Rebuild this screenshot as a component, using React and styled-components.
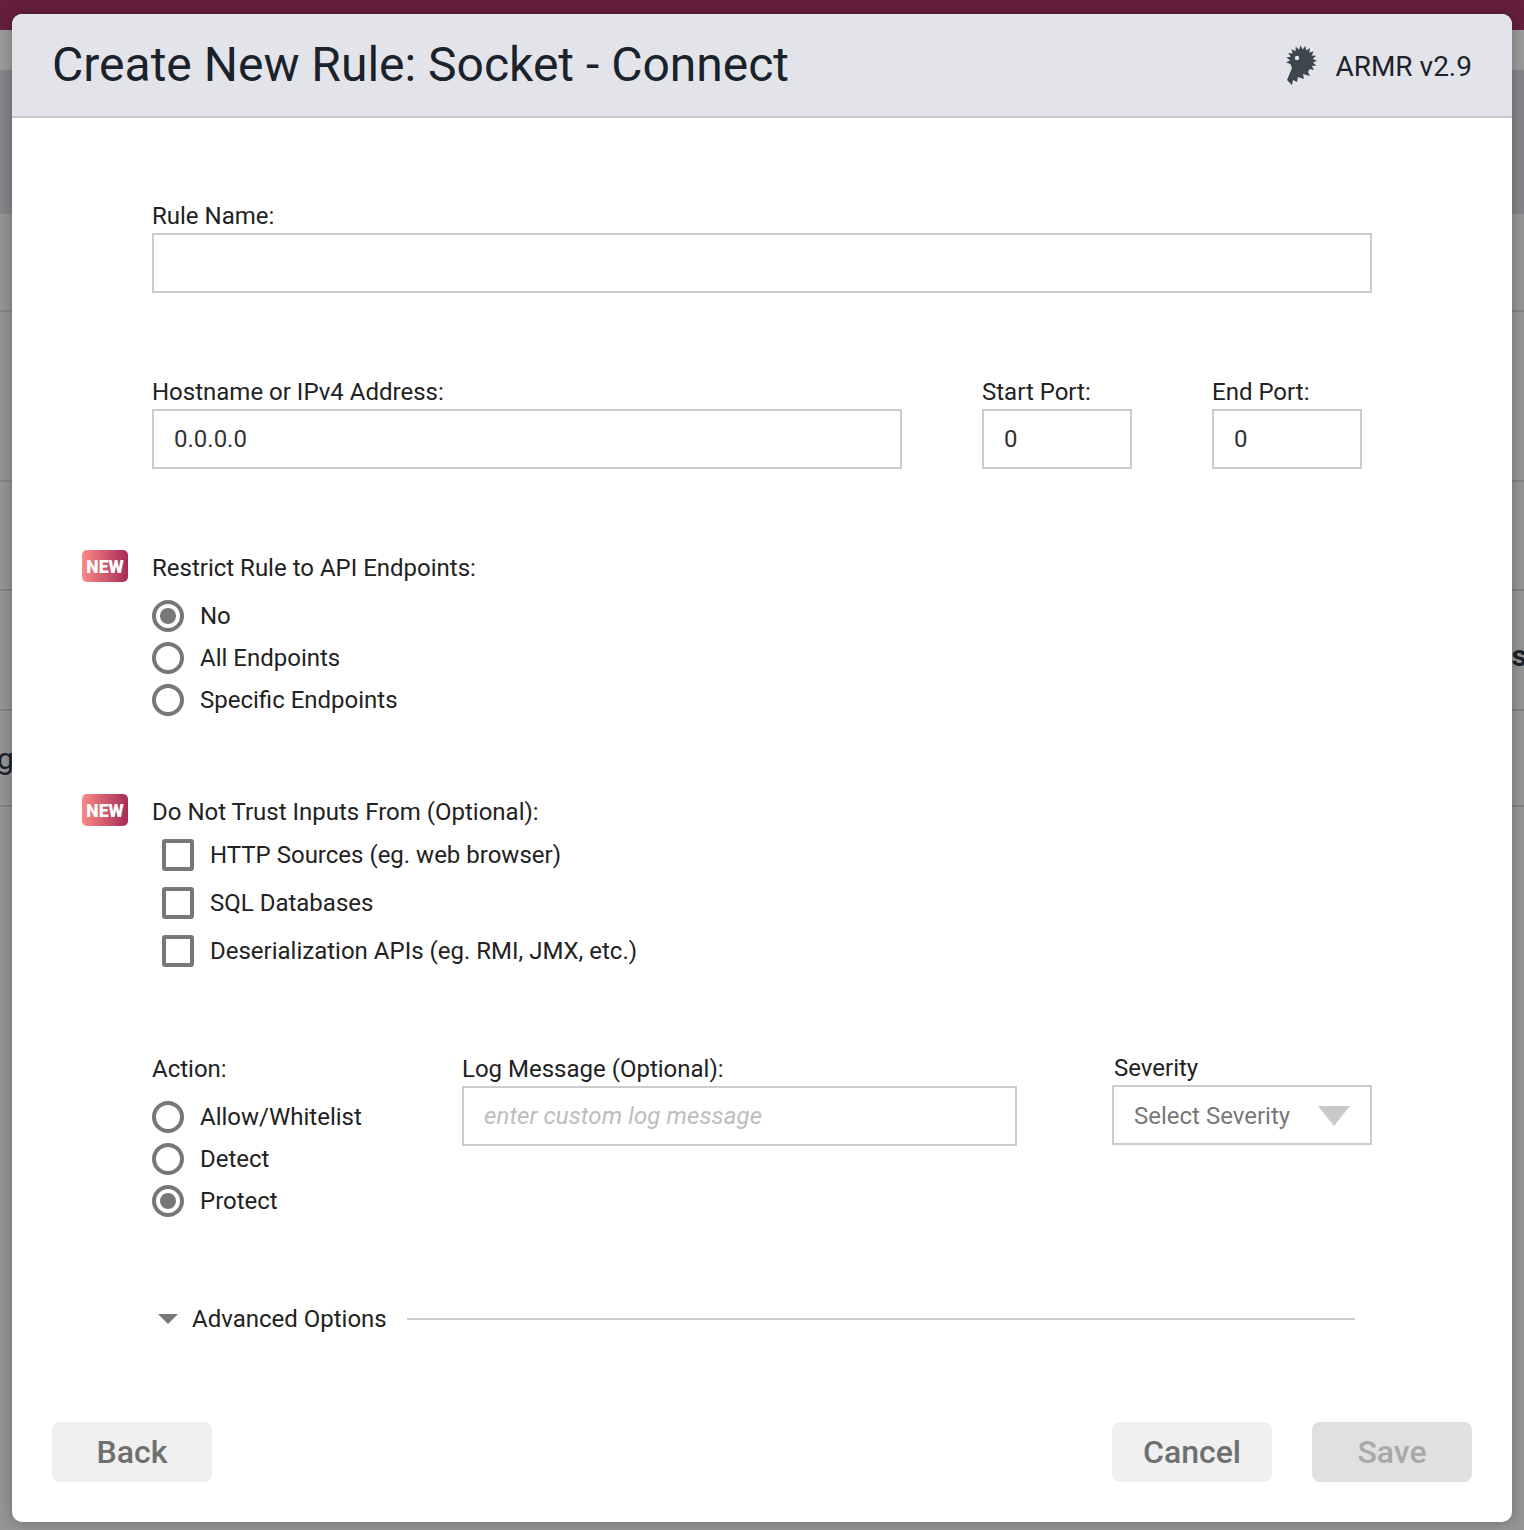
import React from 'react'
import styled, { createGlobalStyle } from 'styled-components'

const GlobalStyle = createGlobalStyle`
  html, body {
    margin: 0;
    padding: 0;
    background: #959595;
    font-family: Roboto, "Liberation Sans", sans-serif;
  }
  * {
    box-sizing: border-box;
  }
`

const Page = styled.div`
  position: relative;
  width: 1524px;
  height: 1530px;
  overflow: hidden;
  background: #959595;
`

const TopBar = styled.div`
  height: 30px;
  background: #66203c;
`

const SubBar = styled.div`
  height: 40px;
  background: #9c9c9c;
`

const Band = styled.div`
  height: 144px;
  background: #838588;
`

const BackRow = styled.div`
  height: ${(p) => p.$height}px;
  display: flex;
  align-items: center;
  justify-content: ${(p) => (p.$end ? 'flex-end' : 'flex-start')};
  border-bottom: ${(p) => (p.$plain ? 'none' : '2px solid #838383')};
  color: #1d2229;
  font-size: 30px;
  font-weight: ${(p) => (p.$end ? 700 : 400)};
`

const PeekLetter = styled.span`
  margin: 0 -3px;
  position: relative;
  top: ${(p) => p.$top || 0}px;
`

const Modal = styled.div`
  position: absolute;
  left: 12px;
  top: 14px;
  width: 1500px;
  height: 1508px;
  display: flex;
  flex-direction: column;
  background: #fff;
  border-radius: 10px;
  box-shadow: 0 0 14px rgba(0, 0, 0, 0.28);
  overflow: hidden;
`

const Header = styled.header`
  height: 104px;
  flex: none;
  display: flex;
  align-items: center;
  justify-content: space-between;
  padding: 0 40px;
  background: #e3e4e9;
  border-bottom: 2px solid #c8c8c8;
`

const Title = styled.h1`
  margin: 0 0 2px;
  font-size: 48px;
  font-weight: 400;
  color: #1a222c;
`

const Version = styled.div`
  display: flex;
  align-items: center;
  gap: 18px;
  font-size: 28px;
  color: #1d232c;
`

const VersionText = styled.span`
  margin-top: 2px;
`

const Form = styled.div`
  flex: 1;
  display: flex;
  flex-direction: column;
  padding: 84px 0 0 140px;
`

const Section = styled.section`
  margin-bottom: ${(p) => p.$gap}px;
`

const Row = styled.div`
  display: flex;
  align-items: flex-start;
`

const Field = styled.div`
  width: ${(p) => p.$width}px;
  margin-right: ${(p) => p.$after || 0}px;
  margin-top: ${(p) => (p.$raise ? -p.$raise : 0)}px;
`

const Label = styled.div`
  position: relative;
  height: 28px;
  line-height: 28px;
  margin-bottom: ${(p) => p.$gap ?? 3}px;
  padding-left: ${(p) => p.$indent || 0}px;
  font-size: 24px;
  color: #222;
  white-space: nowrap;
`

const Badge = styled.span`
  position: absolute;
  left: -70px;
  top: -4px;
  width: 46px;
  height: 32px;
  padding-top: 2px;
  display: flex;
  align-items: center;
  justify-content: center;
  border-radius: 5px;
  background: linear-gradient(90deg, #f98a84, #a62b57);
  color: #fff;
  font-size: 17.5px;
  font-weight: 900;
`

const TextInput = styled.input`
  display: block;
  width: 100%;
  height: 60px;
  padding: 0 20px;
  border: 2px solid #cccccc;
  border-radius: 0;
  outline: none;
  background: #fff;
  font-family: inherit;
  font-size: 24px;
  color: #333;

  &::placeholder {
    color: #bdbdbd;
    font-style: italic;
    letter-spacing: 0.1px;
    opacity: 1;
  }
`

const OptionList = styled.div`
  display: flex;
  flex-direction: column;
  gap: ${(p) => p.$gap}px;
  padding-left: ${(p) => p.$indent || 0}px;
`

const Option = styled.div`
  display: flex;
  align-items: center;
  gap: 16px;
  height: 32px;
  font-size: 24px;
  color: #222;
  white-space: nowrap;
`

const Radio = styled.span`
  width: 32px;
  height: 32px;
  flex: none;
  display: flex;
  align-items: center;
  justify-content: center;
  border: 4px solid #777;
  border-radius: 50%;

  &::after {
    content: '';
    width: 16px;
    height: 16px;
    border-radius: 50%;
    background: ${(p) => (p.$checked ? '#777' : 'transparent')};
  }
`

const Check = styled.span`
  width: 32px;
  height: 32px;
  flex: none;
  border: 4px solid #777;
  border-radius: 3px;
`

const SelectBox = styled.div`
  width: 260px;
  height: 60px;
  display: flex;
  align-items: center;
  justify-content: space-between;
  padding: 2px 20px 0;
  border: 2px solid #cccccc;
  font-size: 24px;
  color: #777;
`

const Caret = styled.span`
  width: 0;
  height: 0;
  border-left: ${(p) => p.$size}px solid transparent;
  border-right: ${(p) => p.$size}px solid transparent;
  border-top: ${(p) => p.$drop}px solid ${(p) => p.$color};
`

const Advanced = styled.div`
  display: flex;
  align-items: center;
  width: 1203px;
  height: 32px;
  padding-left: 6px;
  font-size: 24px;
  color: #222;
  white-space: nowrap;
`

const AdvancedText = styled.span`
  margin: 0 20px 0 14px;
`

const Rule = styled.div`
  flex: 1;
  height: 2px;
  background: #cccccc;
`

const Footer = styled.footer`
  flex: none;
  display: flex;
  justify-content: space-between;
  padding: 0 40px 40px;
`

const ButtonGroup = styled.div`
  display: flex;
  gap: 40px;
`

const Button = styled.button`
  width: 160px;
  height: 60px;
  border: none;
  border-radius: 8px;
  background: ${(p) => (p.disabled ? '#e0e0e0' : '#f0f0f0')};
  color: ${(p) => (p.disabled ? '#a9a9a9' : '#6f6f6f')};
  font-family: inherit;
  font-size: 32px;
  font-weight: 500;
`

// saw blade head with a tail, spikes are computed round the circle
function logoPath() {
  const pts = []
  const cx = 14.5
  const cy = 16
  const count = 26
  for (let i = 0; i <= count; i++) {
    const a = (-195 + (i * 240) / count) * (Math.PI / 180)
    const r = i % 2 ? 15.5 : 11.5
    pts.push(`${(cx + r * Math.cos(a)).toFixed(1)} ${(cy + r * Math.sin(a)).toFixed(1)}`)
  }
  return `M${pts.join('L')}L21 27L23 31L16 29L17 34L11 32L10 37L6 35L5 40L0 35L5 23Z`
}

function Logo() {
  return (
    <svg width="32" height="40" viewBox="-2 0 32 40">
      <path d={logoPath()} fill="#3d454d" />
      <circle cx="10" cy="13" r="2.2" fill="#e3e4e9" />
    </svg>
  )
}

export default function App() {
  return (
    <Page>
      <GlobalStyle />
      <TopBar />
      <SubBar />
      <Band />
      <BackRow $height={98} />
      <BackRow $height={170} />
      <BackRow $height={109} />
      <BackRow $height={120} $end>
        <PeekLetter $top={5}>s</PeekLetter>
      </BackRow>
      <BackRow $height={96}>
        <PeekLetter>g</PeekLetter>
      </BackRow>
      <BackRow $height={300} $plain />

      <Modal>
        <Header>
          <Title>Create New Rule: Socket - Connect</Title>
          <Version>
            <Logo />
            <VersionText>ARMR v2.9</VersionText>
          </Version>
        </Header>
        <Form>
          <Section $gap={85}>
            <Label>Rule Name:</Label>
            <Field $width={1220}>
              <TextInput />
            </Field>
          </Section>

          <Section $gap={85}>
            <Row>
              <Field $width={750} $after={80}>
                <Label>Hostname or IPv4 Address:</Label>
                <TextInput defaultValue="0.0.0.0" />
              </Field>
              <Field $width={150} $after={80}>
                <Label>Start Port:</Label>
                <TextInput defaultValue="0" />
              </Field>
              <Field $width={150}>
                <Label>End Port:</Label>
                <TextInput defaultValue="0" />
              </Field>
            </Row>
          </Section>

          <Section $gap={82}>
            <Label $gap={18}>
              <Badge>NEW</Badge>
              Restrict Rule to API Endpoints:
            </Label>
            <OptionList $gap={10}>
              <Option>
                <Radio $checked />
                No
              </Option>
              <Option>
                <Radio />
                All Endpoints
              </Option>
              <Option>
                <Radio />
                Specific Endpoints
              </Option>
            </OptionList>
          </Section>

          <Section $gap={88}>
            <Label $gap={13}>
              <Badge>NEW</Badge>
              Do Not Trust Inputs From (Optional):
            </Label>
            <OptionList $gap={16} $indent={10}>
              <Option>
                <Check />
                HTTP Sources (eg. web browser)
              </Option>
              <Option>
                <Check />
                SQL Databases
              </Option>
              <Option>
                <Check />
                Deserialization APIs (eg. RMI, JMX, etc.)
              </Option>
            </OptionList>
          </Section>

          <Section $gap={86}>
            <Row>
              <Field $width={310}>
                <Label $gap={18}>Action:</Label>
                <OptionList $gap={10}>
                  <Option>
                    <Radio />
                    Allow/Whitelist
                  </Option>
                  <Option>
                    <Radio />
                    Detect
                  </Option>
                  <Option>
                    <Radio $checked />
                    Protect
                  </Option>
                </OptionList>
              </Field>
              <Field $width={555} $after={95}>
                <Label>Log Message (Optional):</Label>
                <TextInput placeholder="enter custom log message" />
              </Field>
              <Field $width={260} $raise={1}>
                <Label $indent={2}>Severity</Label>
                <SelectBox>
                  Select Severity
                  <Caret $size={16} $drop={20} $color="#c9c9c9" />
                </SelectBox>
              </Field>
            </Row>
          </Section>

          <Advanced>
            <Caret $size={10} $drop={10} $color="#777" />
            <AdvancedText>Advanced Options</AdvancedText>
            <Rule />
          </Advanced>
        </Form>
        <Footer>
          <Button>Back</Button>
          <ButtonGroup>
            <Button>Cancel</Button>
            <Button disabled>Save</Button>
          </ButtonGroup>
        </Footer>
      </Modal>
    </Page>
  )
}
